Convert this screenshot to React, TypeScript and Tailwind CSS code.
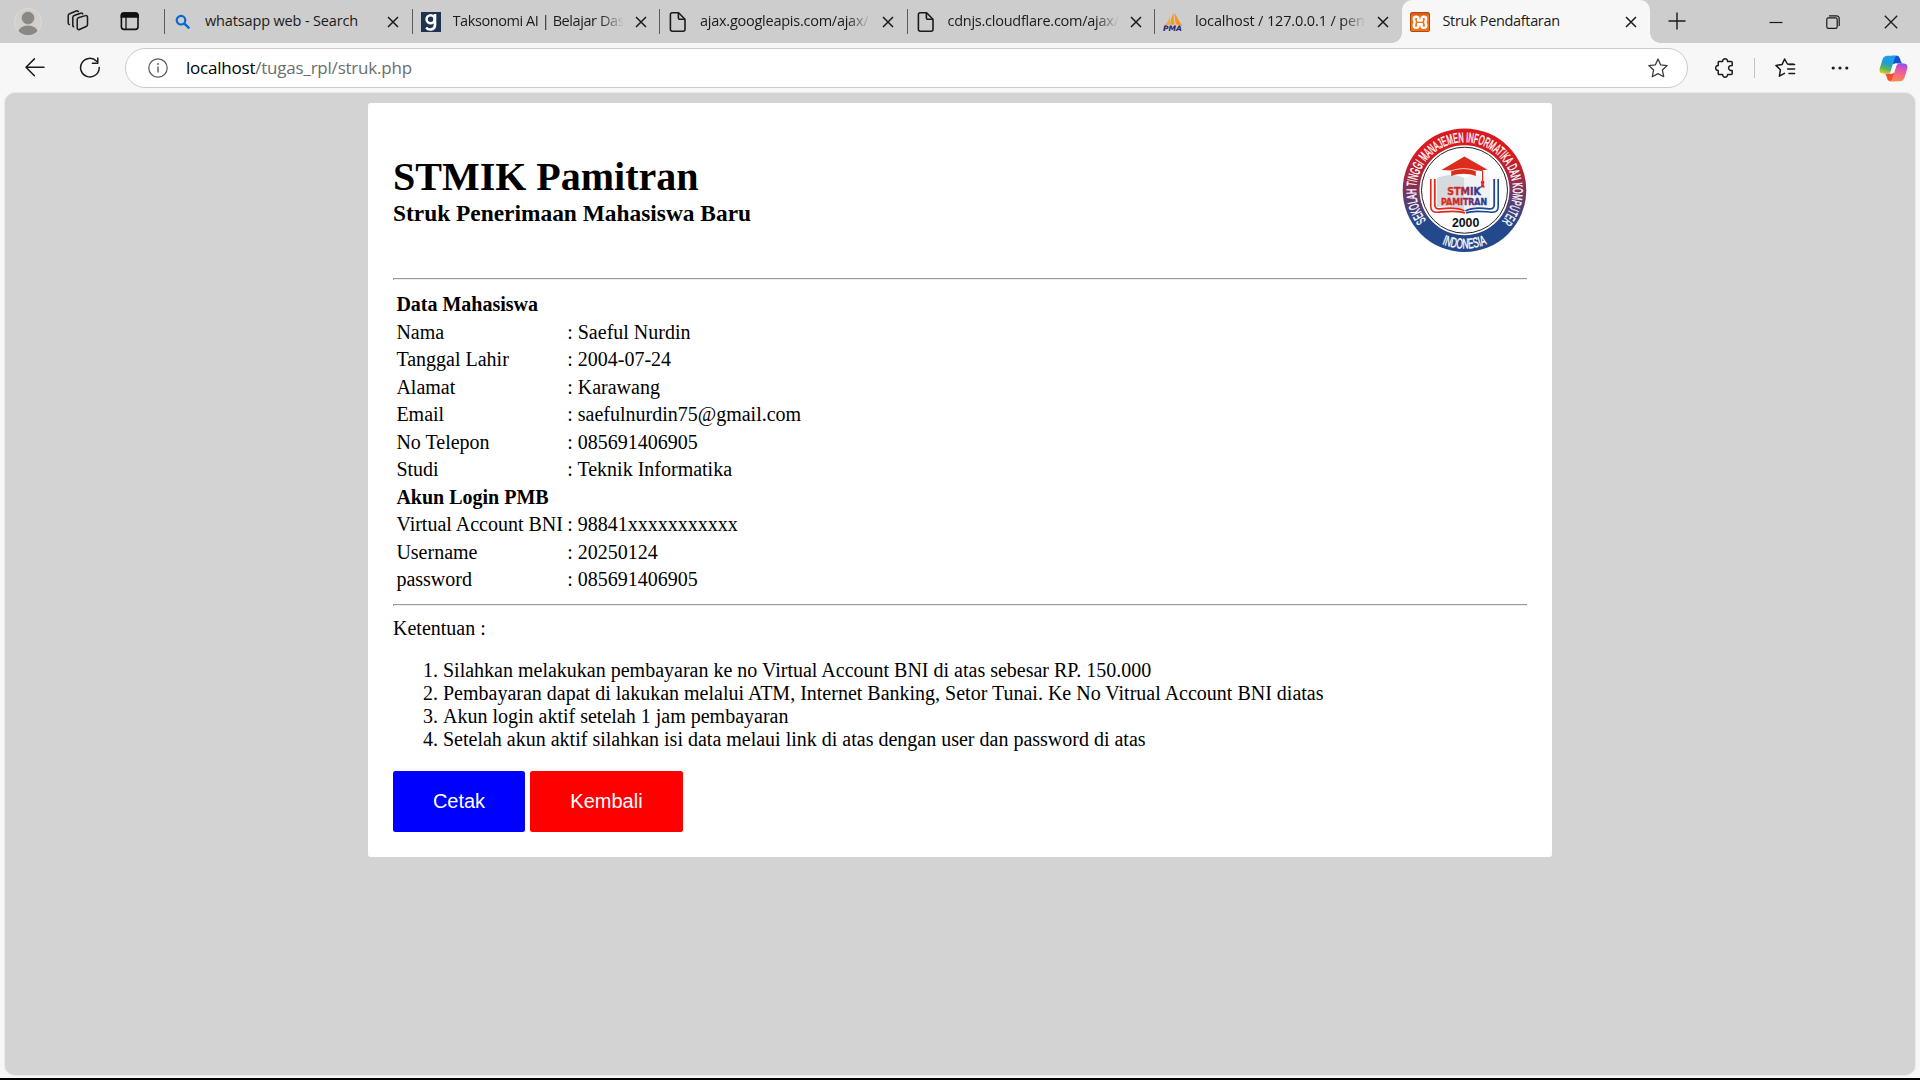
import React from 'react';

const rows: [string, string?][] = [
  ['Data Mahasiswa'],
  ['Nama', 'Saeful Nurdin'],
  ['Tanggal Lahir', '2004-07-24'],
  ['Alamat', 'Karawang'],
  ['Email', 'saefulnurdin75@gmail.com'],
  ['No Telepon', '085691406905'],
  ['Studi', 'Teknik Informatika'],
  ['Akun Login PMB'],
  ['Virtual Account BNI', '98841xxxxxxxxxxx'],
  ['Username', '20250124'],
  ['password', '085691406905'],
];

const terms = [
  'Silahkan melakukan pembayaran ke no Virtual Account BNI di atas sebesar RP. 150.000',
  'Pembayaran dapat di lakukan melalui ATM, Internet Banking, Setor Tunai. Ke No Vitrual Account BNI diatas',
  'Akun login aktif setelah 1 jam pembayaran',
  'Setelah akun aktif silahkan isi data melaui link di atas dengan user dan password di atas',
];

function SearchIcon() {
  return (
    <svg width="20" height="20" viewBox="0 0 20 20" fill="none" stroke="#0a66d0" strokeWidth="2.2" strokeLinecap="round">
      <circle cx="8" cy="8.2" r="4.3" />
      <path d="M11.4 11.6 L15.6 15.6" strokeWidth="2.5" />
    </svg>
  );
}

function GIcon() {
  return (
    <div className="flex h-5 w-5 items-center justify-center bg-[#1f3350]">
      <svg width="20" height="20" viewBox="0 0 20 20" fill="none" stroke="#fff" strokeWidth="2.6">
        <circle cx="9.6" cy="7.2" r="4" />
        <path d="M14 2 V13 C14 18.2 7.4 18.6 5.2 15.4" />
      </svg>
    </div>
  );
}

function FileIcon() {
  return (
    <svg width="20" height="22" viewBox="0 0 20 22" fill="none" stroke="#1b1b1b" strokeWidth="1.6" strokeLinejoin="round">
      <path d="M4.2 1.8 H10.6 L17 8.2 V18.4 A1.8 1.8 0 0 1 15.2 20.2 H4.2 A1.8 1.8 0 0 1 2.4 18.4 V3.6 A1.8 1.8 0 0 1 4.2 1.8 Z" />
      <path d="M10.4 2 V6.8 A1.5 1.5 0 0 0 11.9 8.3 H16.8" />
    </svg>
  );
}

function PmaIcon() {
  return (
    <svg width="20" height="20" viewBox="0 0 20 20">
      <path d="M6.5 3 C6.6 7 5 11 1.2 13.4 L7 12.6 Z" fill="#f9a63a" />
      <path d="M11 0.2 C8.6 4.4 7.4 8 7.4 12.8 L11.6 12.6 C10.6 8.6 10.4 4.4 11 0.2 Z" fill="#f89c0e" />
      <path d="M11.8 1 C11.6 5.4 12 9 13.2 12.6 L19.4 13.4 C16.6 10.4 14.2 6 11.8 1 Z" fill="#f7931e" />
      <text x="0" y="19.4" fontSize="7.4" fontWeight="700" fontStyle="italic" fontFamily="'DejaVu Sans'" fill="#26266b" textLength="19" lengthAdjust="spacingAndGlyphs">
        PMA
      </text>
    </svg>
  );
}

function XamppIcon() {
  return (
    <svg width="20" height="20" viewBox="0 0 20 20">
      <rect x="0.5" y="0.5" width="19" height="19" rx="1.5" fill="#f4701a" stroke="#b6480a" />
      <path d="M1 1 H19 V3.4 H1 Z" fill="#c75a1c" opacity="0.7" />
      <path
        d="M8.2 8.4 Q9.2 4.8 6.4 4.8 Q3 4.8 4 8 Q5.4 10.2 4 12.4 Q3 15.8 6.4 15.8 Q9.2 15.8 8.2 12.2 H11.8 Q10.8 15.8 13.6 15.8 Q17 15.8 16 12.4 Q14.6 10.2 16 8 Q17 4.8 13.6 4.8 Q10.8 4.8 11.8 8.4 Z"
        fill="none"
        stroke="#fff"
        strokeWidth="2.5"
        strokeLinejoin="round"
      />
    </svg>
  );
}

function CloseIcon() {
  return (
    <svg className="shrink-0" width="12" height="12" viewBox="0 0 12 12" stroke="#1a1a1a" strokeWidth="1.5">
      <path d="M1 1 L11 11 M11 1 L1 11" />
    </svg>
  );
}

type TabProps = { icon: React.ReactNode; title: string; titleClass: string; fade?: boolean };

function Tab({ icon, title, titleClass, fade = true }: TabProps) {
  return (
    <div className="flex h-[43px] w-[247.5px] shrink-0 items-center">
      <div className="h-[25px] w-px bg-[#5c5c5c]" />
      <div className="ml-[8px] flex w-5 justify-center">{icon}</div>
      <div
        className={
          'mb-[2px] ml-3 w-[171px] overflow-hidden whitespace-nowrap text-[14.5px] leading-5 text-[#1b1b1b] ' +
          titleClass +
          (fade ? ' [mask-image:linear-gradient(to_right,#000_86%,transparent)]' : '')
        }
      >
        {title}
      </div>
      <div className="ml-[11px]">
        <CloseIcon />
      </div>
    </div>
  );
}

function TabStrip() {
  return (
    <div className="flex h-[43px] items-center bg-[#cdcdcd]">
      <svg className="ml-[14px]" width="28" height="28" viewBox="0 0 28 28">
        <defs>
          <clipPath id="avatar">
            <circle cx="14" cy="14" r="13.2" />
          </clipPath>
        </defs>
        <circle cx="14" cy="14" r="13.5" fill="#d3d0cb" stroke="#dddad6" />
        <circle cx="14" cy="10" r="6" fill="#8a8886" stroke="#807d7b" strokeWidth="0.6" />
        <ellipse cx="14" cy="25" rx="10.2" ry="7.6" fill="#8a8886" clipPath="url(#avatar)" />
      </svg>
      <svg className="mb-px ml-6" width="24" height="24" viewBox="0 0 24 24" fill="none" stroke="#1b1b1b" strokeWidth="1.5" strokeLinejoin="round" strokeLinecap="round">
        <path d="M12.2 8.8 L19.4 6.6 A1.6 1.6 0 0 1 21.5 8.2 V15.6 A2 2 0 0 1 20.1 17.5 L13.4 20.5 A1.6 1.6 0 0 1 11.2 19 V10.4 A1.8 1.8 0 0 1 12.2 8.8 Z" />
        <path d="M7.6 17.8 A1.8 1.8 0 0 1 6.8 16.4 V8.4 A2 2 0 0 1 8.2 6.5 L14.6 4.2 A1.7 1.7 0 0 1 16.7 4.9" />
        <path d="M3.4 15.6 A1.8 1.8 0 0 1 2.2 14 V6.6 A2 2 0 0 1 3.6 4.7 L10.2 2 A1.7 1.7 0 0 1 12.3 2.7" />
      </svg>
      <svg className="mb-[2px] ml-[30px]" width="20" height="20" viewBox="0 0 20 20" fill="none" stroke="#111" strokeWidth="1.6">
        <rect x="1.4" y="2" width="16.6" height="16.4" rx="2.6" />
        <path d="M1.4 4.6 A2.6 2.6 0 0 1 4 2 H15.4 A2.6 2.6 0 0 1 18 4.6 V6 H1.4 Z" fill="#111" />
        <path d="M6 6 V18" strokeWidth="1.3" />
      </svg>
      <div className="ml-6 flex">
        <Tab icon={<SearchIcon />} title="whatsapp web - Search" titleClass="tracking-[-0.15px]" fade={false} />
        <Tab icon={<GIcon />} title="Taksonomi AI | Belajar Das" titleClass="tracking-[-0.42px]" />
        <Tab icon={<FileIcon />} title="ajax.googleapis.com/ajax/" titleClass="tracking-[-0.25px]" />
        <Tab icon={<FileIcon />} title="cdnjs.cloudflare.com/ajax/" titleClass="tracking-[-0.25px]" />
        <Tab icon={<PmaIcon />} title="localhost / 127.0.0.1 / pen" titleClass="tracking-[-0.14px]" />
      </div>
      <div className="relative flex h-[43px] w-[248px] shrink-0 items-center rounded-t-[10px] bg-[#f7f7f7] pl-2">
        <div className="absolute bottom-0 left-[-10px] h-[10px] w-[10px] bg-[radial-gradient(circle_at_0_0,transparent_9.5px,#f7f7f7_10px)]" />
        <div className="absolute right-[-10px] bottom-0 h-[10px] w-[10px] bg-[radial-gradient(circle_at_100%_0,transparent_9.5px,#f7f7f7_10px)]" />
        <XamppIcon />
        <div className="mb-[2px] ml-[13px] w-[173px] whitespace-nowrap text-[14.5px] leading-5 tracking-[-0.34px] text-[#1b1b1b]">Struk Pendaftaran</div>
        <div className="ml-[9px]">
          <CloseIcon />
        </div>
      </div>
      <svg className="mb-px ml-[18px]" width="18" height="18" viewBox="0 0 18 18" stroke="#1a1a1a" strokeWidth="1.4">
        <path d="M9 0.5 V17.5 M0.5 9 H17.5" />
      </svg>
      <svg className="mr-[43px] ml-auto" width="14" height="14" viewBox="0 0 14 14" stroke="#1a1a1a" strokeWidth="1.2">
        <path d="M0.5 7.5 H13.5" />
      </svg>
      <svg className="mr-[44px]" width="14" height="14" viewBox="0 0 14 14" fill="none" stroke="#1a1a1a" strokeWidth="1.2">
        <rect x="0.8" y="2.8" width="10.4" height="10.6" rx="1.6" />
        <path d="M3 0.8 H10.6 A2.6 2.6 0 0 1 13.2 3.4 V11" />
      </svg>
      <svg className="mr-[22px]" width="14" height="14" viewBox="0 0 14 14" stroke="#1a1a1a" strokeWidth="1.3">
        <path d="M0.8 0.8 L13.2 13.2 M13.2 0.8 L0.8 13.2" />
      </svg>
    </div>
  );
}

function Copilot() {
  return (
    <svg width="29" height="27" viewBox="0 0 29 27">
      <defs>
        <linearGradient id="cpA" x1="0.3" y1="0" x2="0" y2="1">
          <stop offset="0" stopColor="#1c9cf0" />
          <stop offset="0.35" stopColor="#1f9fd0" />
          <stop offset="0.65" stopColor="#55b560" />
          <stop offset="0.95" stopColor="#f2cc16" />
        </linearGradient>
        <linearGradient id="cpB" x1="0.5" y1="0" x2="0.3" y2="1">
          <stop offset="0" stopColor="#a64ce8" />
          <stop offset="0.4" stopColor="#ec5c9c" />
          <stop offset="1" stopColor="#fc8a4c" />
        </linearGradient>
      </defs>
      <path d="M13 0.8 H17.6 C20.2 0.8 20.8 3 21.6 5.6 C22 7.4 22.6 8.4 24.4 8.4 H17 C15.6 8.4 15 9.4 14.4 11 Z" fill="#1450d4" />
      <path d="M16 26.2 H11.4 C8.8 26.2 8.2 24 7.6 21.8 C7 19.6 6.4 18.6 4.6 18.6 H12 C13.4 18.6 14 17.6 14.6 16 Z" fill="#f0502c" />
      <path d="M8.6 0.8 H18.2 C16.2 1.2 15.6 3.4 15 5.4 L12 15.2 C11.2 17.8 10 18.6 8 18.6 H4.2 C0.6 18.6 0 15.6 1 12.4 L3.4 4.8 C4.4 1.8 6 0.8 8.6 0.8 Z" fill="url(#cpA)" />
      <path d="M20.4 26.2 H10.8 C12.8 25.8 13.4 23.6 14 21.6 L17 11.8 C17.8 9.2 19 8.4 21 8.4 H24.8 C28.4 8.4 29 11.4 28 14.6 L25.6 22.2 C24.6 25.2 23 26.2 20.4 26.2 Z" fill="url(#cpB)" />
      <path d="M14.2 9 Q15.2 8.2 18.4 8.5 Q17.4 9.6 17 11 L15 17.6 Q14.2 18.8 10.8 18.8 Q11.8 17.6 12.2 16 Z" fill="#fff" />
    </svg>
  );
}

function Toolbar() {
  return (
    <div className="flex h-[50px] items-center bg-[#f7f7f7]">
      <svg className="ml-[25px]" width="20" height="20" viewBox="0 0 20 20" fill="none" stroke="#1b1b1b" strokeWidth="1.5" strokeLinecap="round" strokeLinejoin="round">
        <path d="M19 9.2 H1 M9.4 0.9 L1 9.2 L9.4 17.8" />
      </svg>
      <svg className="ml-[34px]" width="22" height="22" viewBox="0 0 22 22" fill="none" stroke="#1b1b1b" strokeWidth="1.5" strokeLinecap="round" strokeLinejoin="round">
        <path d="M17.6 4.2 A9.3 9.3 0 1 0 20.2 10.6 M18.8 1 V6.2 H13.4" />
      </svg>
      <div className="ml-[24px] flex h-[40px] w-[1563px] items-center rounded-full border border-[#cbcbcb] bg-white">
        <svg className="ml-[22px]" width="20" height="20" viewBox="0 0 20 20" fill="none" stroke="#5a5a5a" strokeWidth="1.2">
          <circle cx="10" cy="10" r="9.2" />
          <path d="M10 8.6 V14.6" strokeWidth="1.4" />
          <circle cx="10" cy="6" r="0.9" fill="#5a5a5a" stroke="none" />
        </svg>
        <div className="ml-[18px] text-[17px] leading-6 tracking-[-0.22px] text-[#6d6d6d]">
          <span className="text-black">localhost</span>/tugas_rpl/struk.php
        </div>
        <svg className="mr-[19px] ml-auto" width="20" height="20" viewBox="0 0 20 20" fill="none" stroke="#3c3c3c" strokeWidth="1.3" strokeLinejoin="round">
          <path d="M10 1 L12.7 6.9 L19.2 7.6 L14.4 12 L15.7 18.7 L10 15.6 L4.3 18.7 L5.6 12 L0.8 7.6 L7.3 6.9 Z" />
        </svg>
      </div>
      <svg className="ml-[27px]" width="20" height="20" viewBox="0 0 20 20" fill="none" stroke="#1b1b1b" strokeWidth="1.5" strokeLinejoin="round">
        <path d="M4 3.6 H7.6 C7.4 -0.2 12.8 -0.2 12.6 3.6 H16.2 A1 1 0 0 1 17.2 4.6 V7.6 C12.4 7 12.4 13 17.2 12.6 V15.4 A1 1 0 0 1 16.2 16.4 H12.6 C12.8 20.2 7.4 20.2 7.6 16.4 H4.2 A1 1 0 0 1 3.2 15.4 V12.6 C-0.2 12.6 -0.2 7.4 3.2 7.6 V4.6 A1 1 0 0 1 4 3.6 Z" />
      </svg>
      <div className="ml-[19px] h-5 w-px bg-[#c4c4c4]" />
      <svg className="ml-5" width="21" height="20" viewBox="0 0 21 20" fill="none" stroke="#1b1b1b" strokeWidth="1.5" strokeLinejoin="round" strokeLinecap="round">
        <path d="M18.4 6.2 L12.4 6 L9.6 1 L7 6.6 L0.9 7.4 L5.4 11.8 L4.4 18.2 L9.4 15.4" />
        <path d="M14 6.6 H19.6 M12.6 11 H19.6 M14 15.4 H19.6" />
      </svg>
      <svg className="ml-[35px]" width="18" height="6" viewBox="0 0 18 6" fill="#1b1b1b">
        <circle cx="2.2" cy="3" r="1.6" />
        <circle cx="9" cy="3" r="1.6" />
        <circle cx="15.8" cy="3" r="1.6" />
      </svg>
      <div className="mr-[12px] ml-auto">
        <Copilot />
      </div>
    </div>
  );
}

function CampusLogo() {
  return (
    <svg width="125" height="125" viewBox="0 0 125 125">
      <defs>
        <linearGradient id="ring" x1="0" y1="0" x2="0" y2="1">
          <stop offset="0.2" stopColor="#d91a20" />
          <stop offset="0.36" stopColor="#b02436" />
          <stop offset="0.55" stopColor="#6c3868" />
          <stop offset="0.76" stopColor="#23498c" />
        </linearGradient>
        <linearGradient id="word" x1="0" y1="0" x2="1" y2="0">
          <stop offset="0" stopColor="#e22a1c" />
          <stop offset="0.4" stopColor="#c4282e" />
          <stop offset="0.7" stopColor="#5a2f78" />
          <stop offset="1" stopColor="#1f3f92" />
        </linearGradient>
        <path id="arcTop" d="M24.3 92.3 A48.4 48.4 0 1 1 100.7 92.3" />
        <path id="arcBottom" d="M20.5 102.5 A58 58 0 0 0 104.5 102.5" />
      </defs>
      <circle cx="62.5" cy="62.2" r="61.8" fill="url(#ring)" />
      <circle cx="62.5" cy="62.2" r="45" fill="#fff" />
      <circle cx="62.5" cy="62.2" r="43" fill="#fdfdfd" stroke="#222" strokeWidth="1" />
      <g fill="#fff" fontFamily="'Liberation Sans', sans-serif" fontSize="14" fontWeight="400" stroke="#fff" strokeWidth="0.4">
        <text>
          <textPath href="#arcTop" startOffset="0" textLength="217" lengthAdjust="spacingAndGlyphs">
            SEKOLAH TINGGI MANAJEMEN INFORMATIKA DAN KOMPUTER
          </textPath>
        </text>
        <text textAnchor="middle">
          <textPath href="#arcBottom" startOffset="50%" textLength="46" lengthAdjust="spacingAndGlyphs">
            INDONESIA
          </textPath>
        </text>
      </g>
      <path d="M35 50 C44 46 54 46 62.5 50 V82 C54 78 44 78 35 79 Z" fill="#d6dadc" />
      <path d="M62.5 50 C71 46 80 46 88 50 V79 C80 78 71 78 62.5 82 Z" fill="#eff3f7" />
      <path d="M28.8 51 V79 C28.8 83.5 32 84.4 36 84.2 C46 83.4 56 82 63 85" fill="none" stroke="#df2b1e" strokeWidth="1.6" />
      <path d="M32.8 51 V77 C32.8 80.2 35 81 38 80.8 C47 79.6 57 79.6 62.5 83" fill="none" stroke="#df2b1e" strokeWidth="1.8" />
      <path d="M96.2 51 V79 C96.2 83.5 93 84.4 89 84.2 C79 83.4 71 82 64 85" fill="none" stroke="#1d4690" strokeWidth="1.6" />
      <path d="M92.2 51 V77 C92.2 80.2 90 81 87 80.8 C78 79.6 69 79.6 63.5 83" fill="none" stroke="#1d4690" strokeWidth="1.8" />
      <path d="M62.4 28.6 L85.6 41.8 L74.4 42.4 C66 39.4 57 39.4 49.4 42.4 L39.4 42 Z" fill="#dd2c1b" />
      <path d="M49.2 43.2 C57 40.4 66 40.4 73.8 43.2 V48 C66 45 57 45 49.2 48 Z" fill="#dd2c1b" />
      <path d="M74 41 L80.6 43 V54" fill="none" stroke="#dd2c1b" strokeWidth="1.2" />
      <path d="M80.6 52.4 L82.8 59.4 H78.4 Z" fill="#dd2c1b" />
      <circle cx="80.6" cy="54.4" r="1.8" fill="#dd2c1b" />
      <g fill="url(#word)" fontFamily="'DejaVu Sans', sans-serif" fontWeight="700">
        <text x="45.3" y="67.2" fontSize="10.6" textLength="33.4" lengthAdjust="spacingAndGlyphs" stroke="url(#word)" strokeWidth="0.4">
          STMIK
        </text>
        <text x="39" y="76.8" fontSize="9.2" textLength="46" lengthAdjust="spacingAndGlyphs" stroke="url(#word)" strokeWidth="0.4">
          PAMITRAN
        </text>
      </g>
      <text x="49.9" y="99.2" fontSize="12.3" fontFamily="'Liberation Sans', sans-serif" fontWeight="700" fill="#111" textLength="27.4" lengthAdjust="spacingAndGlyphs">
        2000
      </text>
    </svg>
  );
}

function Rule() {
  return <div className="h-[2px] border-t border-l border-t-[#9a9a9a] border-l-[#9a9a9a] bg-[#eeeeee]" />;
}

function Receipt() {
  return (
    <div className="h-[754px] w-[1184px] rounded-[3px] bg-white px-[25px] pt-[25px] font-['Liberation_Serif',serif] text-[20px] leading-[23px] text-black">
      <div className="flex h-[125px] justify-between">
        <div className="pt-[26px]">
          <h1 className="text-[40px] leading-[45px] font-bold">STMIK Pamitran</h1>
          <h3 className="pt-px text-[23.4px] leading-[27px] font-bold">Struk Penerimaan Mahasiswa Baru</h3>
        </div>
        <CampusLogo />
      </div>
      <div className="pt-[25px]">
        <Rule />
      </div>
      <div className="pt-[11px] pl-[3.4px]">
        {rows.map(([label, value], i) => (
          <div key={i} className={value ? 'flex h-[27.5px] items-center' : 'flex h-[27.5px] items-center font-bold'}>
            <div className="w-[170.8px] whitespace-nowrap">{label}</div>
            {value && <div>: {value}</div>}
          </div>
        ))}
      </div>
      <div className="pt-[10.5px]">
        <Rule />
      </div>
      <p className="mt-[11px]">Ketentuan :</p>
      <ol className="mt-[19px] list-decimal pl-[50px]">
        {terms.map((t) => (
          <li key={t}>{t}</li>
        ))}
      </ol>
      <div className="mt-5 flex gap-[5px] font-['Liberation_Sans',sans-serif] text-white">
        <button className="h-[61px] w-[132px] rounded-[2.5px] bg-[#0000ff]">Cetak</button>
        <button className="h-[61px] w-[153px] rounded-[2.5px] bg-[#ff0000]">Kembali</button>
      </div>
    </div>
  );
}

export default function App() {
  return (
    <div className="flex h-[1080px] w-[1920px] flex-col overflow-hidden border-b-2 border-black bg-[#f7f7f7] font-['Open_Sans',sans-serif]">
      <TabStrip />
      <Toolbar />
      <div className="mx-[5px] mb-[3px] flex flex-1 justify-center rounded-[10px] bg-[#d3d3d3] pt-[10px] shadow-[0_0_2px_rgba(0,0,0,0.2)]">
        <Receipt />
      </div>
    </div>
  );
}
